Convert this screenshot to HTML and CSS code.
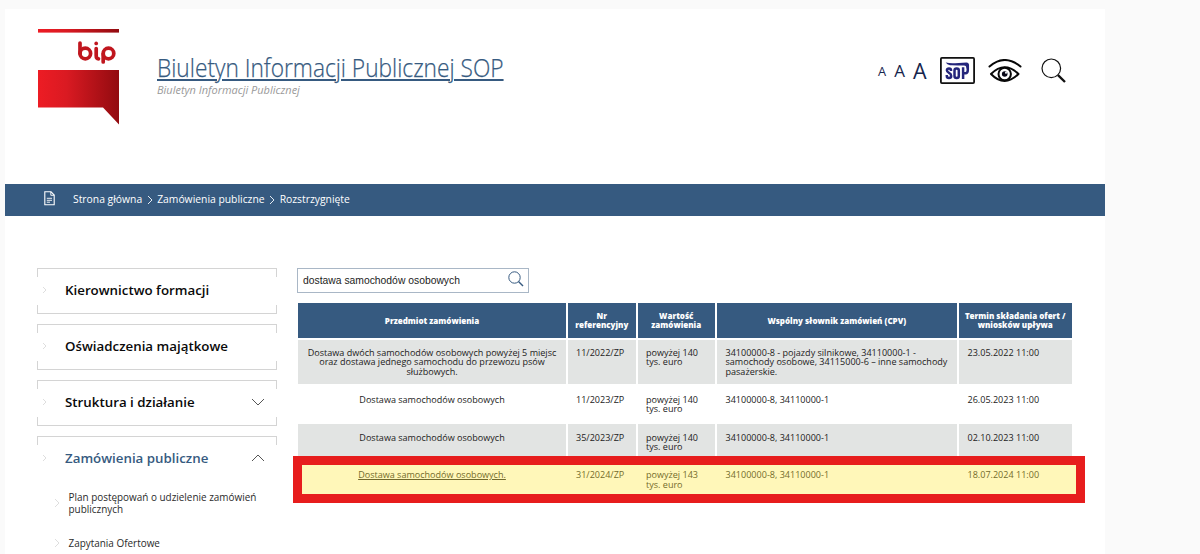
FILE: index.html
```html
<!DOCTYPE html>
<html lang="pl">
<head>
<meta charset="utf-8">
<title>Biuletyn Informacji Publicznej SOP</title>
<link rel="stylesheet" href="styles.css">
</head>
<body>
<div class="page">
  <header class="header">
    <svg class="logo" width="82" height="96" viewBox="0 0 82 96">
      <defs><linearGradient id="red"><stop offset="0" stop-color="#ed1c24"/><stop offset=".35" stop-color="#da1a22"/><stop offset="1" stop-color="#920b10"/></linearGradient></defs>
      <rect width="81" height="3.6" fill="url(#red)"/>
      <path d="M0 41H81V95.500L65 78.500H0Z" fill="url(#red)"/>
      <g fill="none" stroke="#c0161e" stroke-width="3.700" stroke-linecap="round">
        <path d="M42 14V24.500"/><circle cx="47.300" cy="24.500" r="5.300"/>
        <path d="M58.200 19.500V26.500Q58.200 29.800 60.500 29.800"/><path d="M58.200 14.400V14.500"/>
        <path d="M65.200 25V33"/><circle cx="70.500" cy="24.500" r="5.300"/>
      </g>
    </svg>
    <div class="brand">
      <a class="title" href="#">Biuletyn Informacji Publicznej SOP</a>
      <div class="subtitle">Biuletyn Informacji Publicznej</div>
    </div>
    <div class="tools">
      <span class="size small">A</span><span class="size medium">A</span><span class="size large">A</span>
      <span class="sop"><svg width="35" height="27" viewBox="0 0 35 27">
        <rect x=".9" y=".9" width="33.200" height="25.200" rx="1" fill="#fff" stroke="#111" stroke-width="1.800"/>
        <g fill="none" stroke="#24257b" stroke-width="2.500">
          <path d="M11 14V13.300Q11 11.400 9 11.400Q6.900 11.400 6.900 13.300Q6.900 14.800 9 15.800Q11.200 16.900 11.200 18.900Q11.200 20.900 9 20.900Q6.800 20.900 6.800 18.900V18"/>
          <rect x="14.500" y="11.400" width="4.300" height="9.500" rx="2"/>
          <path d="M23.100 22V10.300M23.100 16.200H25.500Q27.800 16.200 27.800 13V7.500"/>
        </g>
        <path d="M5.700 5.600Q10 6.500 15 6.200L26.500 5.600Q29 5.700 29 8.500V11.500H26.500Q26.500 8.600 24 8.500H18Q14 8.200 10 8.300Q7 7.800 5.700 5.600Z" fill="#24257b"/>
      </svg></span>
      <svg class="eye" width="34" height="26" viewBox="0 0 34 26">
        <g fill="none" stroke="#080808" stroke-width="2" stroke-linecap="round">
          <path d="M1.500 7.500Q16.500-5.500 32.500 7.500"/>
          <path d="M3 15Q16.500 1.500 30.500 15Q16.500 29 3 15Z" stroke-linejoin="round"/>
          <circle cx="16.700" cy="15" r="6.200"/>
        </g>
        <circle cx="16.700" cy="15" r="2.800" fill="#080818"/><circle cx="18" cy="13.700" r="1" fill="#fff"/>
      </svg>
      <svg class="lens" width="26" height="26" viewBox="0 0 26 26" fill="none" stroke="#111">
        <circle cx="10.300" cy="10.300" r="9.300" stroke-width="1.200"/><path d="M17 17.200L24 24" stroke-width="2.400"/>
      </svg>
    </div>
  </header>

  <nav class="crumbs">
    <svg class="doc" width="11" height="15" viewBox="0 0 11 15" fill="none" stroke="#fff">
      <path d="M.8.800H7L10.200 4V13.700H.8Z" stroke-width="1.100"/><path d="M6.800.8V4.300H10.200M2.800 7.300H8M2.800 9.300H8M2.800 11.200H6" stroke-width=".9"/>
    </svg>
    <span>Strona główna</span>
    <svg class="sep" width="6" height="10" viewBox="0 0 6 10" fill="none" stroke="#e3eaf2"><path d="M1 1L5 5L1 9"/></svg>
    <span>Zamówienia publiczne</span>
    <svg class="sep" width="6" height="10" viewBox="0 0 6 10" fill="none" stroke="#e3eaf2"><path d="M1 1L5 5L1 9"/></svg>
    <span>Rozstrzygnięte</span>
  </nav>

  <div class="columns">
    <aside class="menu">
      <div class="item"><svg class="arrow" width="5" height="8" viewBox="0 0 5 8"><path d="M1 1L4 4L1 7"/></svg><span class="label">Kierownictwo formacji</span></div>
      <div class="item"><svg class="arrow" width="5" height="8" viewBox="0 0 5 8"><path d="M1 1L4 4L1 7"/></svg><span class="label">Oświadczenia majątkowe</span></div>
      <div class="item"><svg class="arrow" width="5" height="8" viewBox="0 0 5 8"><path d="M1 1L4 4L1 7"/></svg><span class="label">Struktura i działanie</span><svg class="toggle" width="14" height="8" viewBox="0 0 14 8"><path d="M1 1L7 7L13 1"/></svg></div>
      <div class="item open"><svg class="arrow" width="5" height="8" viewBox="0 0 5 8"><path d="M1 1L4 4L1 7"/></svg><span class="label">Zamówienia publiczne</span><svg class="toggle" width="14" height="8" viewBox="0 0 14 8"><path d="M1 7L7 1L13 7"/></svg></div>
      <div class="sub"><svg class="arrow" width="6" height="10" viewBox="0 0 6 10"><path d="M1 1L5 5L1 9"/></svg><span>Plan postępowań o udzielenie zamówień<br>publicznych</span></div>
      <div class="sub"><svg class="arrow" width="6" height="10" viewBox="0 0 6 10"><path d="M1 1L5 5L1 9"/></svg><span>Zapytania Ofertowe</span></div>
    </aside>

    <main class="content">
      <div class="search"><span>dostawa samochodów osobowych</span>
        <svg width="16" height="16" viewBox="0 0 16 16" fill="none" stroke="#365a80"><circle cx="6.500" cy="6.500" r="5.700" stroke-width="1"/><path d="M10.500 10.500L15 15" stroke-width="1.400"/></svg>
      </div>
      <div class="table">
        <div class="row head"><div>Przedmiot zamówienia</div><div>Nr<br>referencyjny</div><div>Wartość<br>zamówienia</div><div>Wspólny słownik zamówień (CPV)</div><div>Termin składania ofert /<br>wniosków upływa</div></div>
        <div class="row grey tall"><div>Dostawa dwóch samochodów osobowych powyżej 5 miejsc<br>oraz dostawa jednego samochodu do przewozu psów<br>służbowych.</div><div>11/2022/ZP</div><div>powyżej 140<br>tys. euro</div><div>34100000-8 - pojazdy silnikowe, 34110000-1 -<br>samochody osobowe, 34115000-6 – inne samochody<br>pasażerskie.</div><div>23.05.2022 11:00</div></div>
        <div class="row"><div>Dostawa samochodów osobowych</div><div>11/2023/ZP</div><div>powyżej 140<br>tys. euro</div><div>34100000-8, 34110000-1</div><div>26.05.2023 11:00</div></div>
        <div class="row grey"><div>Dostawa samochodów osobowych</div><div>35/2023/ZP</div><div>powyżej 140<br>tys. euro</div><div>34100000-8, 34110000-1</div><div>02.10.2023 11:00</div></div>
        <div class="row marked"><div><a href="#">Dostawa samochodów osobowych.</a></div><div>31/2024/ZP</div><div>powyżej 143<br>tys. euro</div><div>34100000-8, 34110000-1</div><div>18.07.2024 11:00</div></div>
      </div>
    </main>
  </div>
</div>
</body>
</html>
```
FILE: styles.css
```css
*, *::after { box-sizing: border-box; }
body { margin: 0; background: #fafafa; font-family: "Open Sans", sans-serif; height: 554px; overflow: hidden; }
.page { width: 1100px; height: 545px; margin: 9px 0 0 5px; background: #fff; }
.header { display: flex; height: 175.400px; padding: 20px 38px 0 33px; }
.logo { flex: none; }
.brand { margin: 18px 0 0 37px; width: 348px; white-space: nowrap; }
.title { display: block; width: max-content; font-size: 26.500px; line-height: 40px; font-weight: 300; color: #365a80; -webkit-text-stroke: .25px #365a80; text-decoration: underline; text-decoration-thickness: 2px; text-underline-offset: 2px; transform: scaleX(.857); transform-origin: left; }
.subtitle { font-size: 10.970px; line-height: 14px; font-style: italic; color: #999; margin-top: -4px; }
.tools { display: flex; align-items: flex-start; margin-left: auto; }
.size { color: #16254d; line-height: 24px; margin-top: 30px; }
.small { font-size: 12.800px; margin-right: 8px; }
.medium { font-size: 17px; margin-right: 8px; }
.large { font-size: 21.500px; margin-right: 13.500px; }
.sop { margin-top: 28px; height: 27px; }
.sop svg { display: block; }
.eye { margin: 30px 0 0 13px; }
.lens { margin: 29px 0 0 19px; }
.crumbs { display: flex; align-items: center; height: 32px; background: #365a80; color: #fff; font-size: 10.350px; font-weight: 500; padding: 0 0 3px 39px; white-space: nowrap; }
.doc { margin-right: 18px; }
.sep { margin: 2px 4.500px 0 4.500px; }
.columns { display: flex; padding: 51.600px 0 0 32px; }
.menu { width: 240px; display: flex; flex-direction: column; }
.item { display: flex; align-items: center; height: 46px; margin-bottom: 10px; padding: 0 12px 1.500px 5px; border: solid #d4d4d4; border-width: 1px 0; background: linear-gradient(#d4d4d4, #d4d4d4) 0 0 / 1px 8px, linear-gradient(#d4d4d4, #d4d4d4) 100% 0 / 1px 8px, linear-gradient(#d4d4d4, #d4d4d4) 0 100% / 1px 8px, linear-gradient(#d4d4d4, #d4d4d4) 100% 100% / 1px 8px; background-repeat: no-repeat; }
.arrow { flex: none; fill: none; stroke: #dedede; }
.toggle { margin-left: auto; fill: none; stroke: #555; }
.label { margin-left: 18px; font-size: 13.320px; font-weight: 600; color: #0a0a0a; white-space: nowrap; }
.open { height: 45px; border-bottom: 0; background-size: 1px 8px, 1px 8px, 0 0, 0 0; }
.open .label { color: #365a80; }
.sub { display: flex; align-items: center; margin: 0 0 22px 17px; gap: 8.500px; font-size: 9.930px; line-height: 12px; color: #2b2b2b; white-space: nowrap; }
.content { margin-left: 20px; width: 775px; }
.search { display: flex; align-items: center; justify-content: space-between; width: 232px; height: 25px; border: 1px solid #a9b7c6; padding: 0 4px 0 5px; font: 10.350px "Liberation Sans", sans-serif; color: #222; }
.search svg { margin-top: -2px; }
.table { display: flex; flex-direction: column; gap: 2px; margin: 10px 0 0 1px; font-size: 9.060px; line-height: 9.200px; color: #222; }
.row { display: grid; grid-template-columns: 268px 68.500px 77.500px 240.500px 113.500px; column-gap: 1.500px; height: 36px; white-space: nowrap; }
.row > div { padding: 8.500px 8px 0 8.500px; }
.row > div:first-child { padding-right: 8.500px; text-align: center; }
.row > div:nth-child(4) { padding-left: 9px; }
.row > div:nth-child(5) { padding-left: 9px; }
.grey > div { background: #e2e4e3; }
.row.tall { height: 44.500px; }
.row.tall > div { padding-top: 8.300px; }
.head { height: 35px; color: #fff; font-size: 8px; font-weight: 800; }
.row.head > div { display: flex; align-items: center; justify-content: center; text-align: center; background: #365a80; padding: 0 0 .5px; }
.row.marked { position: relative; margin-top: -.5px; color: #222; }
.marked a { color: inherit; text-decoration: underline; }
.marked::after { content: ""; position: absolute; left: -5px; top: -6px; width: 792px; height: 47px; border: 9px solid #e71d1d; background: rgba(255, 232, 60, .36); background-clip: padding-box; }
```
